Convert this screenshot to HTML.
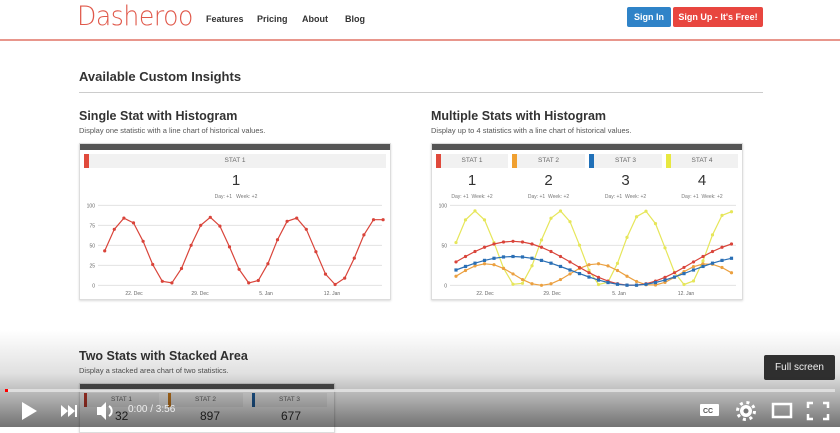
<!DOCTYPE html>
<html><head><meta charset="utf-8"><style>
*{margin:0;padding:0;box-sizing:border-box}
body{width:840px;height:427px;overflow:hidden;background:#fff;font-family:"Liberation Sans",sans-serif;position:relative;color:#333}
.abs{position:absolute}
.logo{left:77px;top:1px;font-size:27px;color:#e0584a;font-family:"DejaVu Sans",sans-serif;font-weight:200;letter-spacing:-0.5px;transform-origin:0 0;transform:scaleX(0.93)}
.nav{top:14px;font-size:9px;color:#333;font-weight:bold}
.btn{top:7px;height:20px;color:#fff;font-size:9px;font-weight:bold;text-align:center;line-height:20px;border-radius:2px}
.card{border:1px solid #ddd;background:#fff;box-shadow:0 1px 2px rgba(0,0,0,.15)}
.card .bar{height:6px;background:#555}
h2{font-size:12.5px;font-weight:bold;color:#333}
.desc{font-size:7.5px;color:#555}
.stat{position:absolute;top:10px;height:14px;background:#f1f1f1;font-size:6.5px;color:#666;text-align:center;line-height:14px}
.stat i{position:absolute;left:0;top:0;width:5px;height:14px}
.big{position:absolute;font-size:15px;color:#333;text-align:center}
.small{position:absolute;font-size:5px;color:#777;text-align:center}
</style></head><body>
<div class="abs logo">Dasheroo</div>
<div class="abs nav" style="left:206px">Features</div>
<div class="abs nav" style="left:257px">Pricing</div>
<div class="abs nav" style="left:302px">About</div>
<div class="abs nav" style="left:345px">Blog</div>
<div class="abs btn" style="left:627px;width:44px;background:#2f83c8">Sign In</div>
<div class="abs btn" style="left:673px;width:90px;background:#e8463f">Sign Up - It's Free!</div>
<div class="abs" style="left:0;top:39px;width:840px;height:1.5px;background:#e8968c"></div>

<div class="abs" style="left:79px;top:69px;font-size:13px;font-weight:bold;color:#333">Available Custom Insights</div>
<div class="abs" style="left:79px;top:92px;width:684px;height:1px;background:#ccc"></div>

<h2 class="abs" style="left:79px;top:109px">Single Stat with Histogram</h2>
<div class="abs desc" style="left:79px;top:126px">Display one statistic with a line chart of historical values.</div>
<h2 class="abs" style="left:431px;top:109px">Multiple Stats with Histogram</h2>
<div class="abs desc" style="left:431px;top:126px">Display up to 4 statistics with a line chart of historical values.</div>

<div class="abs card" style="left:79px;top:143px;width:312px;height:157px">
<div class="bar"></div>
<div class="stat" style="left:4px;width:302px"><i style="background:#e04a3c"></i>STAT 1</div>
<div class="big" style="left:0;width:312px;top:28px">1</div>
<div class="small" style="left:0;width:312px;top:50px">Day: +1 &nbsp; Week: +2</div>
</div>
<div class="abs card" style="left:431px;top:143px;width:312px;height:157px">
<div class="bar"></div>
<div class="stat" style="left:4px;width:72px"><i style="background:#e04a3c"></i>STAT 1</div>
<div class="stat" style="left:80px;width:73px"><i style="background:#f0a030"></i>STAT 2</div>
<div class="stat" style="left:157px;width:73px"><i style="background:#2070b8"></i>STAT 3</div>
<div class="stat" style="left:234px;width:72px"><i style="background:#e8e840"></i>STAT 4</div>
<div class="big" style="left:4px;width:72px;top:28px">1</div>
<div class="big" style="left:80px;width:73px;top:28px">2</div>
<div class="big" style="left:157px;width:73px;top:28px">3</div>
<div class="big" style="left:234px;width:72px;top:28px">4</div>
<div class="small" style="left:4px;width:72px;top:50px">Day: +1 &nbsp;Week: +2</div>
<div class="small" style="left:80px;width:73px;top:50px">Day: +1 &nbsp;Week: +2</div>
<div class="small" style="left:157px;width:73px;top:50px">Day: +1 &nbsp;Week: +2</div>
<div class="small" style="left:234px;width:72px;top:50px">Day: +1 &nbsp;Week: +2</div>
</div>

<svg id="sv" class="abs" style="left:0;top:0" width="840" height="427" font-family="Liberation Sans" font-size="5" fill="#666"></svg>

<h2 class="abs" style="left:79px;top:349px">Two Stats with Stacked Area</h2>
<div class="abs desc" style="left:79px;top:366px">Display a stacked area chart of two statistics.</div>
<div class="abs card" style="left:79px;top:383px;width:256px;height:50px">
<div class="bar"></div>
<div class="stat" style="left:4px;width:75px;top:9px"><i style="background:#c03a2c;width:3px"></i>STAT 1</div>
<div class="stat" style="left:88px;width:75px;top:9px"><i style="background:#d08020;width:3px"></i>STAT 2</div>
<div class="stat" style="left:172px;width:75px;top:9px"><i style="background:#2060a0;width:3px"></i>STAT 3</div>
<div class="big" style="left:35px;top:25px;font-size:12px">32</div>
<div class="big" style="left:120px;top:25px;font-size:12px">897</div>
<div class="big" style="left:201px;top:25px;font-size:12px">677</div>
</div>

<div class="abs" style="left:0;top:330px;width:840px;height:97px;background:linear-gradient(to bottom,rgba(0,0,0,0),rgba(0,0,0,.12) 45%,rgba(0,0,0,.55))"></div>
<div class="abs" style="left:5px;top:389px;width:830px;height:3px;background:rgba(230,230,230,.8)"></div>
<div class="abs" style="left:5px;top:389px;width:3px;height:3px;background:#f00"></div>
<div class="abs" style="left:764px;top:355px;width:71px;height:25px;background:rgba(28,28,28,.9);border-radius:2px;color:#eee;font-size:10px;line-height:25px;text-align:center">Full screen</div>
<div class="abs" style="left:128px;top:404px;color:#eee;font-size:10px">0:00 / 3:56</div>
<svg class="abs" style="left:0;top:395px" width="840" height="32" fill="#fff">
<path d="M22 7 L37 16 L22 25Z"/>
<path d="M61 10 L68 16 L61 22Z M68 10 L75 16 L68 22Z"/><rect x="75" y="10" width="2" height="12"/>
<path d="M97 12 h4 l5 -5 v18 l-5 -5 h-4Z"/><path d="M109 11 a6 6 0 0 1 0 10" stroke="#fff" stroke-width="2" fill="none"/>
<rect x="700" y="9" width="19" height="12" rx="1"/><text x="703" y="18" font-size="7" fill="#555" font-family="Liberation Sans" font-weight="bold">CC</text>
<circle cx="746" cy="16" r="6"/><circle cx="746" cy="16" r="8.5" fill="none" stroke="#fff" stroke-width="3" stroke-dasharray="3 3.7"/><circle cx="746" cy="16" r="2.5" fill="#777"/>
<rect x="773" y="9" width="18" height="13" fill="none" stroke="#fff" stroke-width="2.5"/>
<path d="M808 13 v-5 h5 M823 8 h5 v5 M828 19 v5 h-5 M813 24 h-5 v-5" stroke="#fff" stroke-width="2.5" fill="none"/>
</svg>

<script>
var sv=document.getElementById('sv'),h='';
function grid(x0,x1,labels,vals){
 vals.forEach(function(v,k){var y=285.3-v*0.8;h+='<line x1="'+x0+'" x2="'+x1+'" y1="'+y+'" y2="'+y+'" stroke="#ddd" stroke-width="0.8"/>';h+='<text x="'+(x0-3)+'" y="'+(y+2)+'" text-anchor="end">'+labels[k]+'</text>';});
}
function line(xs,vs,c,sq){
 var p=xs.map(function(x,i){return x.toFixed(1)+','+(285.3-vs[i]*0.8).toFixed(1)}).join(' ');
 h+='<polyline points="'+p+'" fill="none" stroke="'+c+'" stroke-width="1.2"/>';
 xs.forEach(function(x,i){var y=285.3-vs[i]*0.8;h+=sq?'<rect x="'+(x-1.6)+'" y="'+(y-1.6)+'" width="3.2" height="3.2" fill="'+c+'"/>':'<circle cx="'+x+'" cy="'+y+'" r="1.6" fill="'+c+'"/>';});
}
grid(98,382,['0','25','50','75','100'],[0,25,50,75,100]);
grid(450,736,['0','50','100'],[0,50,100]);
['22. Dec','29. Dec','5. Jan','12. Jan'].forEach(function(t,k){h+='<text x="'+(134+k*66)+'" y="295" text-anchor="middle">'+t+'</text>';h+='<text x="'+(485+k*67)+'" y="295" text-anchor="middle">'+t+'</text>';});
var s=[43,70,84,78,55,26,5,3,21,50,75,85,74,48,20,3,6,27,57,80,84,70,42,14,1,9,34,63,82,82];
line(s.map(function(_,i){return 104.7+i*9.6}),s,'#d9443a');
var xs=[],r=[],b=[],o=[],y=[];
for(var i=0;i<30;i++){xs.push(456+i*9.5);
 var c=Math.cos(2*Math.PI*(i-6)/25);
 r.push(27.5+27.5*c);b.push(18+18*c);
 o.push(13.5+13.5*Math.cos(2*Math.PI*(i-3.2)/11.6));
 y.push(Math.max(1,46+47*Math.cos(2*Math.PI*(i-2)/8.9)));}
line(xs,y,'#e6e65a');line(xs,o,'#eba040');line(xs,r,'#d9443a');line(xs,b,'#2a6fb5',true);
sv.innerHTML=h;
</script>
</body></html>
